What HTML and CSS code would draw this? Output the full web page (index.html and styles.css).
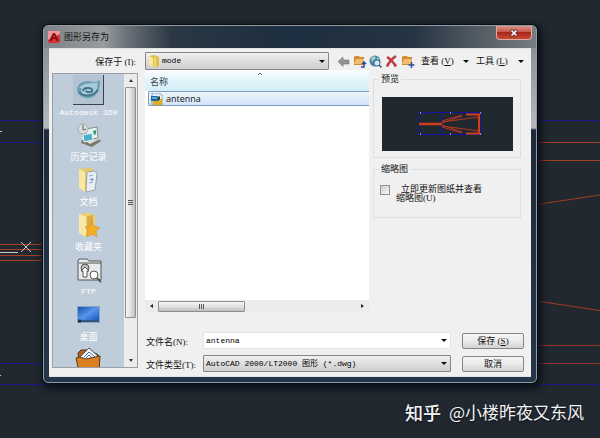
FILE: index.html
```html
<!DOCTYPE html>
<html lang="zh-CN">
<head>
  <meta charset="UTF-8">
  <meta name="viewport" content="width=device-width, initial-scale=1.0">
  <title>图形另存为</title>
  <link rel="stylesheet" href="styles.css">
</head>
<body>
  <div class="desktop">
    <svg class="drawing" viewBox="0 0 600 438" preserveAspectRatio="none" fill="none" aria-hidden="true">
      <path stroke="#15178a" d="M0 120.5H600M0 142.5H60M0 363.5H60M0 384.5H600"/>
      <path stroke="#a43c24" d="M0 244.5H60M0 249.5H60M0 255.5H60M0 260.5H60M530 142.5H600M530 160.5H600M530 205.5L600 195M530 300L600 310.5"/>
      <path stroke="#9c3230" d="M530 345.5H600M530 363.5H600"/>
      <path stroke="#c9c9cb" d="M0 252.5H18M21 242L31 252M31 242L21 252M0 131.5H2M0 375.5H1"/>
    </svg>

    <div class="dialog" role="dialog" aria-labelledby="dialogTitle">
      <div class="titlebar">
        <svg class="app-icon" viewBox="0 0 12 12">
          <rect width="12" height="12" rx="1" fill="#d8343a"/>
          <path d="M0 0H12V3L0 9Z" fill="#ee9a98"/>
          <path d="M1 10L5 2H7L11 10H8.5L7.7 8H5L3.5 10ZM5.5 6.5H7L6.3 4.5Z" fill="#8b0f16"/>
        </svg>
        <span id="dialogTitle">图形另存为</span>
        <button class="close-btn" aria-label="关闭">
          <svg viewBox="0 0 8 8"><path d="M1 1L7 7M7 1L1 7" stroke="#5c2320" stroke-width="3"/><path d="M1.5 1.5L6.5 6.5M6.5 1.5L1.5 6.5" stroke="#fff" stroke-width="1.7"/></svg>
        </button>
      </div>

      <div class="content">
        <div class="left">
          <label class="look-in" for="folder">保存于 (I):</label>
          <div class="places">
            <div class="places-list">
              <button class="place active">
                <svg viewBox="0 0 31 31">
                  <ellipse cx="15" cy="16" rx="11" ry="9" fill="#7fa9bd"/>
                  <path d="M4 15C5 8 12 6 18 7C23 8 26 7 28 5C29 15 26 23 16 24C9 24 4 20 4 15Z" fill="#6a9db3"/>
                  <path d="M6 14C9 8 20 9 26 8C25 12 27 15 21 20C15 23 8 21 8 16C8 12 14 11 18 13" fill="#a5cbd7"/>
                  <path d="M10 17C11 13 20 13 20 16C20 19 15 19 13 17" fill="none" stroke="#41708b" stroke-width="2"/>
                  <path d="M6 18C10 24 21 23 26 16" fill="none" stroke="#42758e" stroke-width="2"/>
                </svg>
                <span class="latin">Autodesk 360</span>
              </button>
              <button class="place">
                <svg viewBox="0 0 27 27">
                  <path d="M6 21L17 25L26 19L23 16L7 18Z" fill="#77776f"/>
                  <path d="M6 16L19 11L25 17L15 22Z" fill="#d8dad2"/>
                  <path d="M11 7L22 5L23 16L12 18Z" fill="#e8f1f0" stroke="#77908b"/>
                  <path d="M8 13L17 11L18 18L9 20Z" fill="#4ab1c8" stroke="#eef6f6"/>
                  <path d="M18 9L21 8V12L19 13Z" fill="#2f9b80"/>
                  <circle cx="8" cy="7" r="5" fill="#d8dfdf" stroke="#a2adad"/>
                  <path d="M8 3V8L11 7" fill="none" stroke="#59676b"/>
                </svg>
                <span>历史记录</span>
              </button>
              <button class="place">
                <svg viewBox="0 0 27 27">
                  <path d="M4 2L16 1L19 4V24L11 25L4 21Z" fill="#e7c766"/>
                  <path d="M4 2L10 5V25L4 21Z" fill="#f8e7a2"/>
                  <path d="M12 5L20 4L22 7L20 23L11 25Z" fill="#e9edf5" stroke="#98a4b4"/>
                  <path d="M14 9L18 8M14 12H19M14 16L18 15" stroke="#8ea5cb"/>
                  <path d="M17 12V14" stroke="#2f5cae"/>
                </svg>
                <span>文档</span>
              </button>
              <button class="place">
                <svg viewBox="0 0 27 27">
                  <path d="M4 2L16 1L20 4V22L11 25L4 21Z" fill="#edcf70"/>
                  <path d="M4 2L11 5V25L4 21Z" fill="#f9e9a9"/>
                  <path d="M12 4L18 3V12L12 20Z" fill="#d9ad46"/>
                  <path d="M17 9L19 14L25 16L21 19L22 25L17 22L11 25L13 18L10 15L15 14Z" fill="#f5ae27" stroke="#cf8b1a" stroke-width=".5"/>
                </svg>
                <span>收藏夹</span>
              </button>
              <button class="place">
                <svg viewBox="0 0 27 27" stroke="#555" fill="#e7e9ea">
                  <path d="M3 4L4 2H12L14 4H26V23H3Z"/>
                  <path d="M4 6H26"/>
                  <circle cx="10" cy="11" r="4" fill="#bbb"/>
                  <path d="M10 10L14 14H12V20H8V14H6Z" fill="#fff"/>
                  <circle cx="19" cy="18" r="4" fill="#fff"/>
                  <path d="M22 21L26 25" stroke-width="2"/>
                </svg>
                <span class="latin">FTP</span>
              </button>
              <button class="place">
                <svg viewBox="0 0 27 27">
                  <defs><linearGradient id="screen" x2="1" y2="1"><stop stop-color="#164fae"/><stop offset=".5" stop-color="#5796ec"/><stop offset="1" stop-color="#1557bd"/></linearGradient></defs>
                  <rect x="2" y="4" width="23" height="17" fill="#8ba5bf"/>
                  <rect x="3" y="5" width="21" height="13" fill="url(#screen)"/>
                  <path d="M3 19H24" stroke="#325680" stroke-width="2"/><path d="M3 19H6" stroke="#1c3446" stroke-width="3"/>
                </svg>
                <span>桌面</span>
              </button>
              <button class="place" aria-label="Buzzsaw">
                <svg viewBox="0 0 27 27">
                  <path d="M3 6L6 3H12L22 7L24 9V23H5Z" fill="#b46017" stroke="#493321"/>
                  <path d="M5 10L14 1L24 10L20 18H7Z" fill="#f5f8fb" stroke="#47505c"/>
                  <path d="M9 10L14 5L20 10M11 11L14 8L17 11" fill="none" stroke="#496aa4"/>
                  <path d="M1 11L5 10L11 12L25 9L24 23L4 25Z" fill="#db801e" stroke="#5a3a1c"/>
                </svg>
              </button>
            </div>
            <div class="vscroll">
              <button class="arrow up" aria-label="向上"></button>
              <div class="thumb"></div>
              <button class="arrow down" aria-label="向下"></button>
            </div>
          </div>
        </div>

        <div class="right">
          <div class="toolbar">
            <div class="combo folder">
              <svg viewBox="0 0 12 12"><path d="M1 1L7 0L11 2V11L6 12L1 10Z" fill="#dfbd4c"/><path d="M1 1L5 3V12L1 10Z" fill="#f8ea9d"/><path d="M6 3L8 2V11L6 12Z" fill="#f3da78"/></svg>
              <select id="folder"><option>mode</option></select>
            </div>
            <div class="tools">
              <button class="tool" aria-label="后退"><svg viewBox="0 0 13 13"><path d="M1 6.5L6 2V5H12V9H6V11.5Z" fill="#929292" stroke="#777" stroke-width=".6"/></svg></button>
              <button class="tool" aria-label="上一级"><svg viewBox="0 0 13 13"><path d="M1 2L2 1H6L7 2H11V9L10 10H1Z" fill="#d88b32"/><path d="M3 4H11L10 9H1Z" fill="#f2bd70"/><path d="M8 12H11V8M9 9L11 7L13 9" fill="none" stroke="#2d4ba3" stroke-width="1.5"/></svg></button>
              <button class="tool" aria-label="搜索 Web"><svg viewBox="0 0 13 13"><circle cx="6" cy="6" r="5.5" fill="#4c86a6"/><path d="M2 3L5 1L7 3L5 5L3 7ZM8 2L11 4L8 5Z" fill="#a7cdbb"/><circle cx="8" cy="8" r="3" fill="#d5eafa" stroke="#3c6899"/><path d="M10 10L12.5 12.5" stroke="#24539a" stroke-width="1.5"/></svg></button>
              <button class="tool" aria-label="删除"><svg viewBox="0 0 13 13"><path d="M2 2Q7 5 11 11.5M11 1Q5 5 2 11.5" fill="none" stroke="#c33a40" stroke-width="2.6"/></svg></button>
              <button class="tool" aria-label="新建文件夹"><svg viewBox="0 0 13 13"><path d="M1 2L2 1H6L7 2H11V9L10 10H1Z" fill="#d88b32"/><path d="M3 4H11L10 9H1Z" fill="#f2bd70"/><path d="M10.5 7V13M7.5 10H13.5" stroke="#2d4ba3" stroke-width="1.5"/></svg></button>
              <button class="menu-btn">查看 (<u>V</u>)</button>
              <button class="menu-btn">工具 (<u>L</u>)</button>
            </div>
          </div>

          <div class="middle">
            <div class="files">
              <table>
                <thead><tr><th>名称<svg class="sort" viewBox="0 0 6 4"><path d="M1 3L3 1L5 3" fill="none" stroke="#56707e"/></svg></th></tr></thead>
                <tbody><tr><td>
                  <div class="file">
                    <svg viewBox="0 0 12 12"><path d="M1 0H8L12 3V12H1Z" fill="#e2edf5" stroke="#54718a" stroke-width=".6"/><path d="M0 3H7V8H0Z" fill="#176b9f"/><path d="M7 4L9 3V7L7 8Z" fill="#333f49"/><path d="M2 8H7L11 5V12H2Z" fill="#e5ad20"/><path d="M1 5H6" stroke="#b6e1ef"/></svg>
                    antenna
                  </div>
                </td></tr></tbody>
              </table>
              <div class="hscroll">
                <button class="arrow prev" aria-label="向左"></button>
                <div class="thumb"></div>
                <button class="arrow next" aria-label="向右"></button>
              </div>
            </div>

            <div class="side">
              <fieldset class="preview">
                <legend>预览</legend>
                <svg viewBox="0 0 131 54" fill="none">
                  <rect width="131" height="54" fill="#202830"/>
                  <rect x="37.5" y="15.5" width="61" height="22" stroke="#1414a0"/>
                  <path d="M59.5 16V38" stroke="#1414a0"/>
                  <path d="M37 27H60" stroke="#d43c1e" stroke-width="2.5"/>
                  <path d="M60 26L80 19M60 28L80 35M60 25L97 20M60 29L97 34M60 24L80 18M60 30L80 36" stroke="#b8371f"/>
                  <path d="M84 17.5H97V36.5H84" stroke="#d43c1e" stroke-width="2"/>
                  <path d="M38 16h1M68 16h1M98 16h1M38 37h1M68 37h1M98 37h1" stroke="#fff"/>
                </svg>
              </fieldset>
              <fieldset class="thumbnail">
                <legend>缩略图</legend>
                <div class="check">
                  <input type="checkbox" id="update">
                  <label for="update">立即更新图纸并查看缩略图(U)</label>
                </div>
              </fieldset>
            </div>
          </div>

          <div class="form">
            <label for="filename">文件名(N):</label>
            <div class="combo name"><input type="text" id="filename" value="antenna"></div>
            <button class="btn">保存 (<u>S</u>)</button>
            <label for="filetype">文件类型(T):</label>
            <div class="combo"><select id="filetype"><option>AutoCAD 2000/LT2000 图形 (*.dwg)</option></select></div>
            <button class="btn">取消</button>
          </div>
        </div>
      </div>
    </div>

    <div class="watermark"><b>知乎</b><span>@小楼昨夜又东风</span></div>
  </div>
</body>
</html>
```
FILE: styles.css
```css
* {
  box-sizing: border-box;
}

body {
  margin: 0;
  background: #212830;
  color: #111;
  font: 9px/12px "Liberation Serif", "Noto Sans CJK SC", serif;
}

button, select, input {
  margin: 0;
  padding: 0;
  border: 0;
  background: none;
  color: inherit;
  font: inherit;
}

.desktop {
  position: relative;
  height: 100vh;
  padding: 25px 63px 55px 43px;
}

.drawing {
  position: absolute;
  top: 0;
  left: 0;
  width: 100%;
  height: 100%;
}

.dialog {
  position: relative;
  display: flex;
  flex-direction: column;
  height: 100%;
  padding: 0 5px 5px;
  border: 1px solid #8f9aa5;
  border-radius: 5px;
  background: linear-gradient(#69727a 0, #8b9399 23px, #b4b9bc 102px, #1d2a3b 104px, #26364a 100%);
  box-shadow: 0 0 0 1px #0b0f14, 2px 3px 7px 3px #0d1118;
}

.titlebar {
  display: flex;
  align-items: center;
  flex: none;
  gap: 4px;
  height: 22px;
  margin: 0 -5px;
  padding-left: 4px;
  border-radius: 4px 4px 0 0;
  background: linear-gradient(90deg, #7e8386, #989b9d 12%, #697077 17%, #2a3844 26%, #1d2e40 50%, #253443 75%, #596168 90%, #777d82);
  font-family: "Noto Sans CJK SC", sans-serif;
}

.app-icon {
  width: 12px;
  height: 12px;
}

.close-btn {
  display: flex;
  align-items: center;
  justify-content: center;
  align-self: flex-start;
  width: 36px;
  height: 14px;
  margin: 0 4px 0 auto;
  border: 1px solid #e2aaa3;
  border-top: 0;
  border-radius: 0 0 4px 4px;
  background: linear-gradient(#d99486, #c5594b 45%, #a92619 50%, #c74a32);
}

.close-btn svg {
  width: 8px;
  height: 8px;
}

.content {
  display: flex;
  flex: 1;
  gap: 7px;
  min-height: 0;
  padding: 3px 7px 4px 3px;
  border: 1px solid #dfe3e6;
  border-width: 1px 0;
  background: #f0f0f0;
}

.left {
  display: flex;
  flex-direction: column;
  width: 86px;
  padding-bottom: 4px;
}

.look-in {
  padding: 4px 2px 5px;
  text-align: right;
}

.places {
  display: flex;
  flex: 1;
  min-height: 0;
  border: 1px solid #9a9fa5;
  background: #bfcddb;
}

.places-list {
  flex: 1;
  overflow: hidden;
}

.place {
  display: flex;
  flex-direction: column;
  align-items: center;
  gap: 2px;
  width: 100%;
  height: 45px;
  padding-top: 1px;
  color: #fff;
}

.place svg {
  flex: none;
  width: 27px;
  height: 27px;
}

.place.active {
  height: 47px;
}

.place.active svg {
  width: 31px;
  height: 30px;
  border-right: 1px solid #39434f;
  border-bottom: 1px solid #39434f;
  background: #b3c3d2;
}

.latin {
  font: 8px/12px "Liberation Mono", monospace;
}

.vscroll {
  display: flex;
  flex-direction: column;
  align-items: center;
  width: 13px;
  background: #ececec;
}

.arrow {
  flex: none;
  display: flex;
  align-items: center;
  justify-content: center;
  width: 13px;
  height: 13px;
}

.arrow::after {
  content: "";
  border: 2px solid transparent;
}

.arrow.up::after {
  border-top: 0;
  border-bottom: 3px solid #333;
}

.arrow.down::after {
  border-bottom: 0;
  border-top: 3px solid #333;
}

.arrow.prev::after {
  border-left: 0;
  border-right: 3px solid #222;
}

.arrow.next::after {
  border-right: 0;
  border-left: 3px solid #222;
}

.thumb {
  display: flex;
  align-items: center;
  justify-content: center;
  border: 1px solid #8f8f8f;
  border-radius: 1px;
}

.vscroll .thumb {
  width: 11px;
  height: 79%;
  margin-bottom: auto;
  background: linear-gradient(90deg, #f5f5f5, #e2e2e2 50%, #bdbdbd);
}

.thumb::after {
  content: "";
  width: 5px;
  height: 5px;
  background: repeating-linear-gradient(90deg, #555 0 1px, transparent 1px 2px);
}

.vscroll .thumb::after {
  background: repeating-linear-gradient(#555 0 1px, transparent 1px 2px);
}

.right {
  display: flex;
  flex: 1;
  flex-direction: column;
  min-width: 0;
}

.toolbar {
  display: flex;
  align-items: center;
  gap: 8px;
}

.combo {
  position: relative;
  display: flex;
  align-items: center;
  height: 17px;
  border: 1px solid #858585;
  border-radius: 1px;
  background: linear-gradient(#f1f1f1, #dedede 50%, #cecece);
}

.combo::after {
  content: "";
  position: absolute;
  right: 3px;
  border: 3px solid transparent;
  border-top-color: #111;
  border-bottom: 0;
  pointer-events: none;
}

.combo select, .combo input {
  appearance: none;
  flex: 1;
  min-width: 0;
  height: 100%;
  padding-left: 2px;
  outline: 0;
  color: #000;
  font: 8px/14px "Liberation Mono", "Noto Sans CJK SC", monospace;
}

.combo.name {
  border-color: #e3e3e3;
  background: #fff;
}

.folder {
  flex: 1;
  height: 18px;
}

.folder svg {
  width: 12px;
  height: 12px;
  margin-left: 2px;
}

.tools {
  display: flex;
  align-items: center;
  width: 187px;
  gap: 3px;
}

.tool {
  width: 13px;
  height: 13px;
}

.tool svg {
  display: block;
  overflow: visible;
}

.menu-btn {
  display: flex;
  align-items: center;
  flex: 1;
  padding-left: 4px;
  white-space: pre;
}

.menu-btn::after {
  content: "";
  margin-left: auto;
  border: 3px solid transparent;
  border-top-color: #111;
  border-bottom: 0;
}

.middle {
  display: flex;
  flex: 1;
  gap: 4px;
  min-height: 0;
}

.files {
  display: flex;
  flex: 1;
  flex-direction: column;
  background: #fff;
}

table {
  width: 100%;
  border-collapse: collapse;
}

th, td {
  padding: 0;
}

th {
  position: relative;
  height: 21px;
  padding: 2px 0 0 5px;
  background: linear-gradient(#fafdff, #e3f4fb 50%, #d5eef8);
  color: #33434f;
  font: 9px/12px "Noto Sans CJK SC", sans-serif;
  text-align: left;
}

.sort {
  position: absolute;
  top: 2px;
  left: 50%;
  width: 6px;
  height: 4px;
}

.file {
  display: flex;
  align-items: center;
  gap: 3px;
  height: 15px;
  margin-left: 3px;
  padding-left: 2px;
  border: 1px solid #7b9dbf;
  border-right: 0;
  border-radius: 2px 0 0 2px;
  background: linear-gradient(#eef5fd, #d3e4f8);
  font: 9px/12px "Open Sans", sans-serif;
}

.file svg {
  width: 12px;
  height: 12px;
}

.hscroll {
  display: flex;
  align-items: center;
  margin-top: auto;
  background: #ececec;
}

.hscroll .arrow {
  height: 12px;
}

.hscroll .thumb {
  width: 39%;
  height: 11px;
  margin-right: auto;
  background: linear-gradient(#f5f5f5, #e2e2e2 50%, #bdbdbd);
}

.side {
  width: 148px;
  margin-right: 3px;
  padding-top: 3px;
}

fieldset {
  min-width: 0;
  margin: 0;
  padding: 0 5px;
  border: 1px solid #dedede;
}

legend {
  padding: 0 2px;
}

.preview {
  height: 85px;
  margin-bottom: 5px;
}

.preview svg {
  display: block;
  width: 131px;
  margin: 12px 0 0 3px;
}

.thumbnail {
  height: 55px;
}

.check {
  display: flex;
  gap: 6px;
  padding: 10px 0 0 1px;
}

.check input {
  appearance: none;
  flex: none;
  width: 10px;
  height: 10px;
  border: 1px solid #929292;
  background: linear-gradient(135deg, #cbcfd5, #f6f6f6);
}

.check label {
  width: 92px;
  line-height: 9px;
  text-indent: 5px;
}

.form {
  display: grid;
  grid-template-columns: 58px 1fr 62px;
  align-items: center;
  row-gap: 6px;
  padding-top: 20px;
}

.form label {
  padding: 3px 0 0 1px;
  white-space: nowrap;
}

.btn {
  height: 16px;
  border: 1px solid #858585;
  border-radius: 2px;
  background: linear-gradient(#f5f5f5, #ebebeb 50%, #d2d2d2);
}

.form .combo {
  margin-right: 11px;
}

.watermark {
  position: absolute;
  right: 16px;
  bottom: 14px;
  display: flex;
  gap: 8px;
  color: #f2f3f4;
  font: 17px/24px "Noto Sans CJK SC", sans-serif;
  text-shadow: 0 1px 2px #0b0e12;
}

.watermark b {
  font-size: 18px;
  font-weight: 500;
}
```
